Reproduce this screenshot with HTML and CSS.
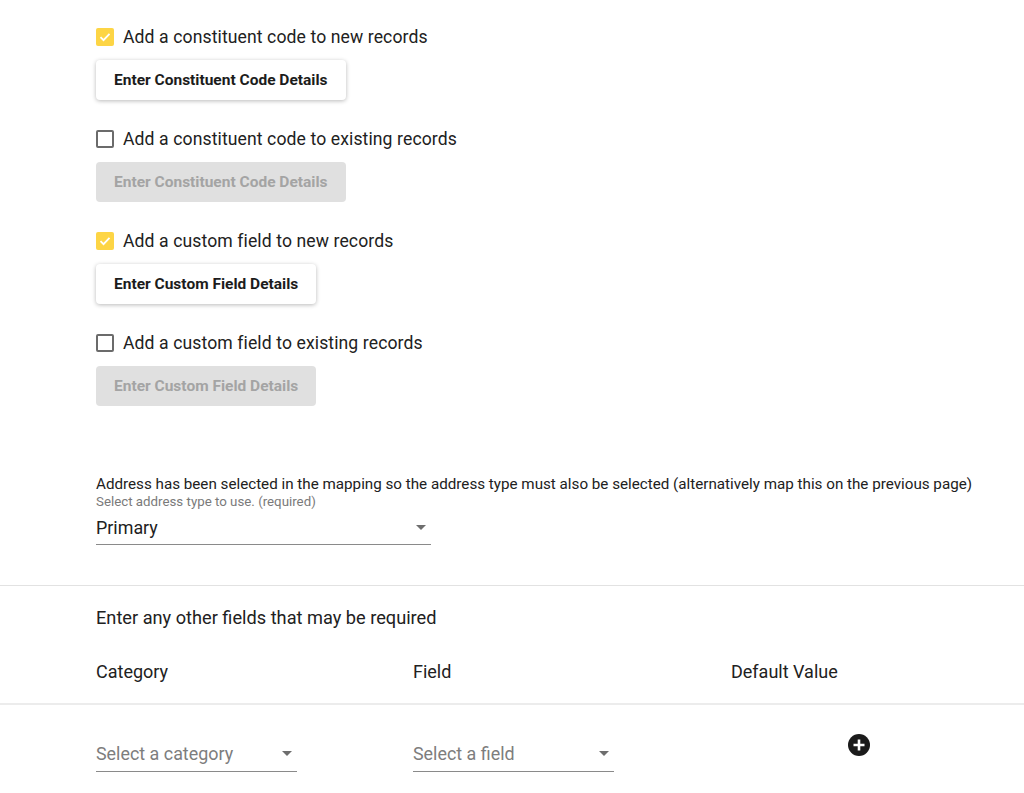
FILE: index.html
```html
<!DOCTYPE html>
<html lang="en">
<head>
  <meta charset="UTF-8" />
  <meta name="viewport" content="width=device-width, initial-scale=1.0"/>
  <title>Import options</title>
  <link rel="stylesheet" href="styles.css">
</head>
<body>
  <div class="section options">
    <div class="option">
      <label class="check-row">
        <span class="box checked"><svg viewBox="0 0 18 18"><path d="M4.5 9.2l3 3 6-6.4" /></svg></span>
        Add a constituent code to new records
      </label>
      <button class="btn">Enter Constituent Code Details</button>
    </div>

    <div class="option">
      <label class="check-row">
        <span class="box"></span>
        Add a constituent code to existing records
      </label>
      <button class="btn" disabled>Enter Constituent Code Details</button>
    </div>

    <div class="option">
      <label class="check-row">
        <span class="box checked"><svg viewBox="0 0 18 18"><path d="M4.5 9.2l3 3 6-6.4" /></svg></span>
        Add a custom field to new records
      </label>
      <button class="btn">Enter Custom Field Details</button>
    </div>

    <div class="option">
      <label class="check-row">
        <span class="box"></span>
        Add a custom field to existing records
      </label>
      <button class="btn" disabled>Enter Custom Field Details</button>
    </div>

    <p class="note">Address has been selected in the mapping so the address type must also be selected (alternatively map this on the previous page)</p>
    <p class="helper">Select address type to use. (required)</p>
    <div class="select address-select">
      <span>Primary</span>
      <span class="arrow"></span>
    </div>
  </div>

  <div class="section other">
    <p class="intro">Enter any other fields that may be required</p>
    <div class="cols heads">
      <div>Category</div>
      <div>Field</div>
      <div>Default Value</div>
    </div>
  </div>

  <div class="section rows">
    <div class="cols">
      <div class="select small placeholder">
        <span>Select a category</span>
        <span class="arrow"></span>
      </div>
      <div class="select small placeholder">
        <span>Select a field</span>
        <span class="arrow"></span>
      </div>
      <div class="add-cell">
        <svg class="add" viewBox="0 0 24 24">
          <circle cx="12" cy="12" r="11" fill="#1b1b1b" />
          <path d="M12 6.5v11M6.5 12h11" stroke="#fff" stroke-width="2.6" />
        </svg>
      </div>
    </div>
  </div>
</body>
</html>
```

FILE: styles.css
```css
body {
  margin: 0;
  font-family: Roboto, "Liberation Sans", sans-serif;
  color: #212121;
  background: #fff;
}

.section {
  padding: 0 96px;
}

.options {
  padding-top: 25px;
  padding-bottom: 40px;
  border-bottom: 1px solid #e2e2e2;
}

.option {
  margin-bottom: 27px;
}

.check-row {
  display: flex;
  align-items: center;
  gap: 9px;
  height: 24px;
  font-size: 17.6px;
  letter-spacing: 0.1px;
}

.box {
  width: 18px;
  height: 18px;
  box-sizing: border-box;
  border: 2px solid #6b6b6b;
  border-radius: 2px;
  display: flex;
}

.box.checked {
  border: none;
  background: #fdd545;
}

.box svg {
  width: 18px;
  height: 18px;
  fill: none;
  stroke: #fff;
  stroke-width: 1.8;
}

.btn {
  display: block;
  margin-top: 11px;
  height: 40px;
  padding: 0 18px;
  border: none;
  border-radius: 4px;
  background: #fff;
  color: #1c1c1c;
  font-family: Roboto, "Liberation Sans", sans-serif;
  font-size: 15.5px;
  font-weight: 700;
  box-shadow: 0 1px 4px rgba(0, 0, 0, 0.28);
  cursor: pointer;
}

.btn:disabled {
  background: #e0e0e0;
  color: #a4a4a4;
  box-shadow: none;
  cursor: default;
}

.note {
  margin: 68px 0 0;
  font-size: 15.2px;
  line-height: 20px;
  white-space: nowrap;
}

.helper {
  margin: 0;
  font-size: 13.3px;
  line-height: 16px;
  color: #7a7a7a;
}

.select {
  display: flex;
  align-items: center;
  justify-content: space-between;
  box-sizing: border-box;
  border-bottom: 1px solid #8a8a8a;
  font-size: 17.9px;
}

.address-select {
  width: 335px;
  height: 35px;
  padding: 0 5px 0 0;
}

.arrow {
  width: 0;
  height: 0;
  border-left: 5px solid transparent;
  border-right: 5px solid transparent;
  border-top: 5px solid #6e6e6e;
}

.other {
  padding-top: 21px;
  border-bottom: 2px solid #ececec;
}

.intro {
  margin: 0;
  font-size: 18.2px;
  line-height: 22px;
}

.cols {
  display: grid;
  grid-template-columns: 317px 318px 1fr;
  align-items: center;
}

.heads {
  padding: 32px 0 20px;
  font-size: 18px;
  line-height: 22px;
}

.rows {
  padding-top: 28px;
}

.select.small {
  width: 201px;
  height: 39px;
  padding: 2px 5px 0 0;
  align-self: start;
}

.placeholder {
  color: #7d7d7d;
}

.add-cell {
  align-self: start;
}

.add {
  display: block;
  width: 24px;
  height: 24px;
  margin-left: 116px;
}
```
